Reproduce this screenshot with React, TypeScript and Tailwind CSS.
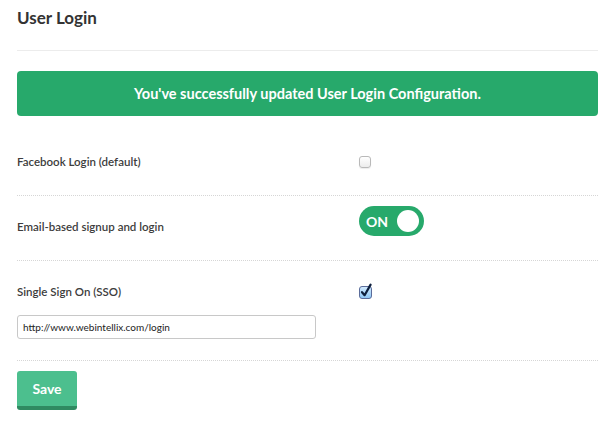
import React, { useState } from 'react';

const font = { fontFamily: 'Lato, "Open Sans", sans-serif' };

function MacCheckbox({ checked, onChange }: { checked: boolean; onChange: () => void }) {
  return (
    <button type="button" onClick={onChange} className="relative block w-[13px] h-[13px]">
      {checked ? (
        <svg width="16" height="16" viewBox="0 0 16 16" className="absolute -top-[3px] left-0 overflow-visible">
          <defs>
            <linearGradient id="cbOn" x1="0" y1="0" x2="0" y2="1">
              <stop offset="0" stopColor="#d4ecff" />
              <stop offset="1" stopColor="#8cc5f5" />
            </linearGradient>
          </defs>
          <rect x="0.5" y="3.5" width="12" height="12" rx="2.5" fill="url(#cbOn)" stroke="#5b6c9a" />
          <path d="M3 9.2 L5.6 12.2 L11.6 1.6" fill="none" stroke="#0e1f3d" strokeWidth="2.2" strokeLinecap="round" strokeLinejoin="round" />
        </svg>
      ) : (
        <span className="block w-[12px] h-[12px] rounded-[3px] border border-[#b9b9b9] bg-gradient-to-b from-white to-[#ececec] shadow-[0_1px_1px_rgba(0,0,0,0.08)]" />
      )}
    </button>
  );
}

export default function App() {
  const [facebook, setFacebook] = useState(false);
  const [email, setEmail] = useState(true);
  const [sso, setSso] = useState(true);
  const [ssoUrl, setSsoUrl] = useState('http://www.webintellix.com/login');

  return (
    <div className="w-[605px] h-[429px] bg-white overflow-hidden" style={font}>
      <div className="ml-[17px] w-[581px] pt-[6px]">
        <h2 className="text-[17px] leading-6 font-bold text-[#333]">User Login</h2>
        <div className="mt-[20px] border-t border-[#ececec]" />

        <div className="mt-[20px] h-[45px] rounded-[4px] bg-[#27a96b] flex items-center justify-center text-white text-[14.5px] font-bold">
          You've successfully updated User Login Configuration.
        </div>

        {/* Facebook */}
        <div className="flex items-start pt-[38px] pb-[25px] border-b border-dotted border-[#d6d6d6]">
          <div className="w-[342px] text-[11.5px] leading-4 font-semibold text-[#3d3d3d]">Facebook Login (default)</div>
          <div className="h-4 flex items-center">
            <MacCheckbox checked={facebook} onChange={() => setFacebook(!facebook)} />
          </div>
        </div>

        {/* Email */}
        <div className="flex items-start pt-[10px] pb-[24px] border-b border-dotted border-[#d6d6d6]">
          <div className="w-[342px] mt-[13px] text-[11.5px] leading-4 font-semibold text-[#3d3d3d]">Email-based signup and login</div>
          <button
            type="button"
            onClick={() => setEmail(!email)}
            className={`w-[65px] h-[30px] rounded-full flex items-center justify-between pl-[7px] pr-[5px] ${email ? 'bg-[#27a96b]' : 'bg-[#cfcfcf]'}`}
          >
            <span className="text-white text-[14px] font-bold">{email ? 'ON' : 'OFF'}</span>
            <span className="w-[22px] h-[22px] rounded-full bg-white" />
          </button>
        </div>

        {/* SSO */}
        <div className="pt-[23px] pb-[21px] border-b border-dotted border-[#d6d6d6]">
          <div className="flex items-start">
            <div className="w-[342px] text-[11.5px] leading-4 font-semibold text-[#3d3d3d]">Single Sign On (SSO)</div>
            <div className="h-4 flex items-center">
              <MacCheckbox checked={sso} onChange={() => setSso(!sso)} />
            </div>
          </div>
          <input
            type="text"
            value={ssoUrl}
            onChange={e => setSsoUrl(e.target.value)}
            className="mt-[15px] block w-[299px] h-[24px] px-[5px] border border-[#c8c8c8] rounded-[3px] text-[10px] text-[#222] focus:outline-none"
            style={font}
          />
        </div>

        <button
          type="button"
          className="mt-[10px] w-[60px] h-[39px] rounded-[3px] bg-[#4cbf8e] border-b-4 border-[#2f8a61] text-white text-[14px] font-bold"
        >
          Save
        </button>
      </div>
    </div>
  );
}
